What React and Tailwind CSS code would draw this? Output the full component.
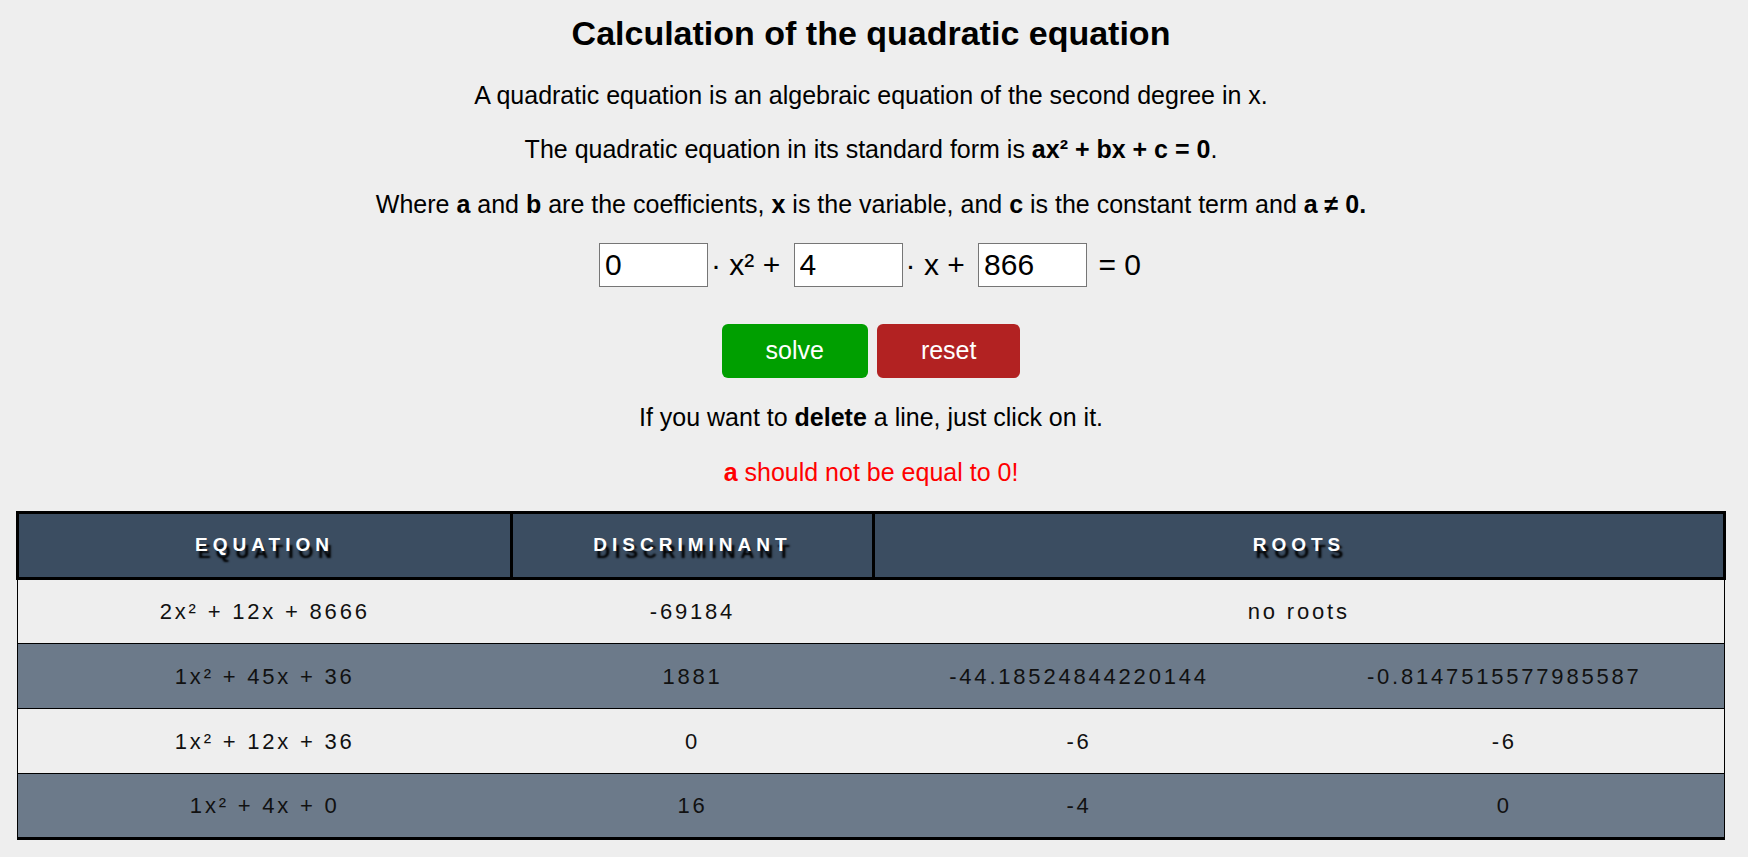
import React from 'react';

const rows = [
  { eq: '2x² + 12x + 8666', d: '-69184', roots: null },
  { eq: '1x² + 45x + 36', d: '1881', roots: ['-44.18524844220144', '-0.8147515577985587'] },
  { eq: '1x² + 12x + 36', d: '0', roots: ['-6', '-6'] },
  { eq: '1x² + 4x + 0', d: '16', roots: ['-4', '0'] },
];

function CoefInput({ value }) {
  return (
    <input
      type="text"
      defaultValue={value}
      className="h-[44px] w-[109px] border border-[#767676] bg-white px-[5px] text-[30px] text-black outline-none"
    />
  );
}

export default function App() {
  const th = 'border-[3px] border-black bg-[#3b4d61] h-[66px] p-0 text-center text-[19px] font-bold uppercase tracking-[5px] text-white [text-shadow:3px_7px_2px_#000]';

  return (
    <div className="min-h-screen bg-[#eeeeee] font-['Liberation_Sans',Arial,sans-serif] text-black">
      <div className="flex w-[1742px] flex-col items-center pt-[14px]">
        <h1 className="text-[34px] font-bold leading-[39px]">Calculation of the quadratic equation</h1>

        <p className="mt-[28px] text-[25px] leading-[29px]">
          A quadratic equation is an algebraic equation of the second degree in x.
        </p>
        <p className="mt-[25px] text-[25px] leading-[29px]">
          The quadratic equation in its standard form is <b>ax² + bx + c = 0</b>.
        </p>
        <p className="mt-[26px] text-[25px] leading-[29px]">
          Where <b>a</b> and <b>b</b> are the coefficients, <b>x</b> is the variable, and <b>c</b> is the constant term and <b>a ≠ 0.</b>
        </p>

        <div className="mt-[24px] flex items-center text-[30px] leading-[34px]">
          <CoefInput value="0" />
          <span className="ml-[3px] mr-[5px] whitespace-pre">· x² + </span>
          <CoefInput value="4" />
          <span className="ml-[3px] mr-[5px] whitespace-pre">· x + </span>
          <CoefInput value="866" />
          <span className="ml-[3px] mr-[2px] whitespace-pre"> = 0</span>
        </div>

        <div className="mt-[37px] flex gap-[9px]">
          <button className="h-[54px] rounded-[6px] bg-[#009f00] px-[44px] text-[25px] text-white">solve</button>
          <button className="h-[54px] rounded-[6px] bg-[#b22222] px-[44px] text-[25px] text-white">reset</button>
        </div>

        <p className="mt-[25px] text-[25px] leading-[29px]">
          If you want to <b>delete</b> a line, just click on it.
        </p>
        <p className="mt-[26px] text-[25px] leading-[29px] text-[#ff0000]">
          <b>a</b> should not be equal to 0!
        </p>

        <table className="mt-[24px] w-[1707px] table-fixed border-collapse">
          <colgroup>
            <col className="w-[494px]" />
            <col className="w-[362px]" />
            <col className="w-[411px]" />
            <col className="w-[440px]" />
          </colgroup>
          <thead>
            <tr>
              <th className={th}>Equation</th>
              <th className={th}>Discriminant</th>
              <th className={th} colSpan={2}>Roots</th>
            </tr>
          </thead>
          <tbody className="text-[22px] tracking-[2.8px] text-[#111]">
            {rows.map((r, i) => {
              const bg = i % 2 === 1 ? 'bg-[#6c7a8a]' : 'bg-[#eeeeee]';
              const last = i === rows.length - 1;
              const td = `h-[65px] border-y border-black p-0 text-center first:border-l last:border-r ${last ? 'border-b-[3px]' : ''}`;
              return (
                <tr key={i} className={bg}>
                  <td className={td}>{r.eq}</td>
                  <td className={td}>{r.d}</td>
                  {r.roots ? (
                    <>
                      <td className={td}>{r.roots[0]}</td>
                      <td className={td}>{r.roots[1]}</td>
                    </>
                  ) : (
                    <td className={td} colSpan={2}>no roots</td>
                  )}
                </tr>
              );
            })}
          </tbody>
        </table>
      </div>
    </div>
  );
}
